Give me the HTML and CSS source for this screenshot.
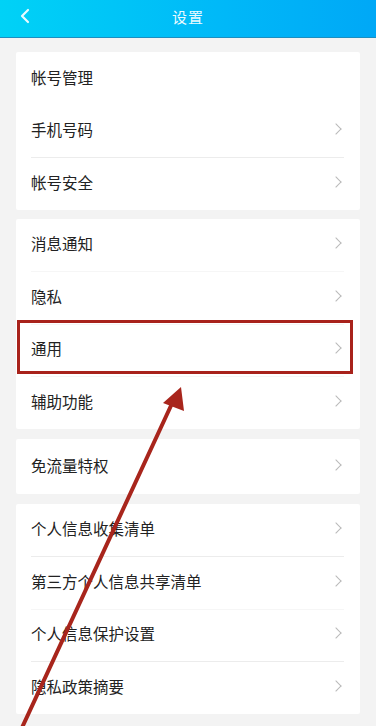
FILE: index.html
```html
<!DOCTYPE html>
<html lang="zh">
<head>
<meta charset="utf-8">
<link rel="stylesheet" href="styles.css">
</head>
<body>
<div class="page">
  <header class="topbar">
    <svg class="back" width="12" height="16" viewBox="0 0 12 16"><path d="M9 2 L3 8 L9 14" fill="none" stroke="#e8fbff" stroke-width="2.2" stroke-linecap="round" stroke-linejoin="round"/></svg>
    <div class="title">设置</div>
  </header>
  <main class="content">
    <section class="card">
      <div class="row nodiv"><span>帐号管理</span></div>
      <div class="row nodiv"><span>手机号码</span><i class="chev"></i></div>
      <div class="row"><span>帐号安全</span><i class="chev"></i></div>
    </section>
    <section class="card c2">
      <div class="row nodiv"><span>消息通知</span><i class="chev"></i></div>
      <div class="row faint"><span>隐私</span><i class="chev"></i></div>
      <div class="row faint"><span>通用</span><i class="chev"></i></div>
      <div class="row faint"><span>辅助功能</span><i class="chev"></i></div>
    </section>
    <section class="card c3">
      <div class="row tall nodiv"><span>免流量特权</span><i class="chev"></i></div>
    </section>
    <section class="card c4">
      <div class="row nodiv"><span>个人信息收集清单</span><i class="chev"></i></div>
      <div class="row"><span>第三方个人信息共享清单</span><i class="chev"></i></div>
      <div class="row faint"><span>个人信息保护设置</span><i class="chev"></i></div>
      <div class="row"><span>隐私政策摘要</span><i class="chev"></i></div>
    </section>
  </main>
  <div class="highlight"></div>
  <svg class="arrow" width="376" height="726" viewBox="0 0 376 726">
    <line x1="20" y1="732" x2="175" y2="397" stroke="#a8251c" stroke-width="4" stroke-linecap="round"/>
    <polygon points="181,387 163,403 184,411" fill="#a8251c"/>
  </svg>
</div>
</body>
</html>
```
FILE: styles.css
```css
html, body {
  margin: 0;
  padding: 0;
}
body {
  background: #f3f3f3;
  font-family: "Noto Sans CJK SC", "Noto Sans", sans-serif;
  width: 376px;
  height: 726px;
  overflow: hidden;
}
.page {
  position: relative;
  width: 376px;
  height: 726px;
}
.topbar {
  height: 37px;
  box-sizing: border-box;
  padding-bottom: 4px;
  background: linear-gradient(90deg, #00d2f6 0%, #00b8f8 60%, #00a8f6 100%);
  border-bottom: 1px solid #1c8ec0;
  display: flex;
  align-items: center;
  justify-content: center;
  position: relative;
  height: 38px;
}
.back {
  position: absolute;
  left: 19px;
  top: 8px;
}
.title {
  color: #eafaff;
  font-size: 15px;
  letter-spacing: 1px;
}
.content {
  padding: 14px 16px 0;
  display: flex;
  flex-direction: column;
}
.card {
  background: #fff;
  border-radius: 2px;
}
.c2 { margin-top: 9px; }
.c3 { margin-top: 10px; }
.c4 { margin-top: 10px; }
.row {
  height: 52.5px;
  margin: 0 16px 0 15px;
  padding-bottom: 4px;
  display: flex;
  align-items: center;
  justify-content: space-between;
  border-top: 1px solid #ececec;
  box-sizing: border-box;
  font-size: 15.5px;
  color: #222;
}
.row.tall { height: 55px; }
.row.nodiv { border-top-color: transparent; }
.row.faint { border-top-color: #f6f6f6; }
.chev {
  width: 7px;
  height: 7px;
  border-top: 1.5px solid #b9b9b9;
  border-right: 1.5px solid #b9b9b9;
  transform: rotate(45deg);
  margin-right: 4px;
}
.highlight {
  position: absolute;
  left: 17px;
  top: 320px;
  width: 330px;
  height: 48px;
  border: 3px solid #a8221b;
}
.arrow {
  position: absolute;
  left: 0;
  top: 0;
  pointer-events: none;
}
```
